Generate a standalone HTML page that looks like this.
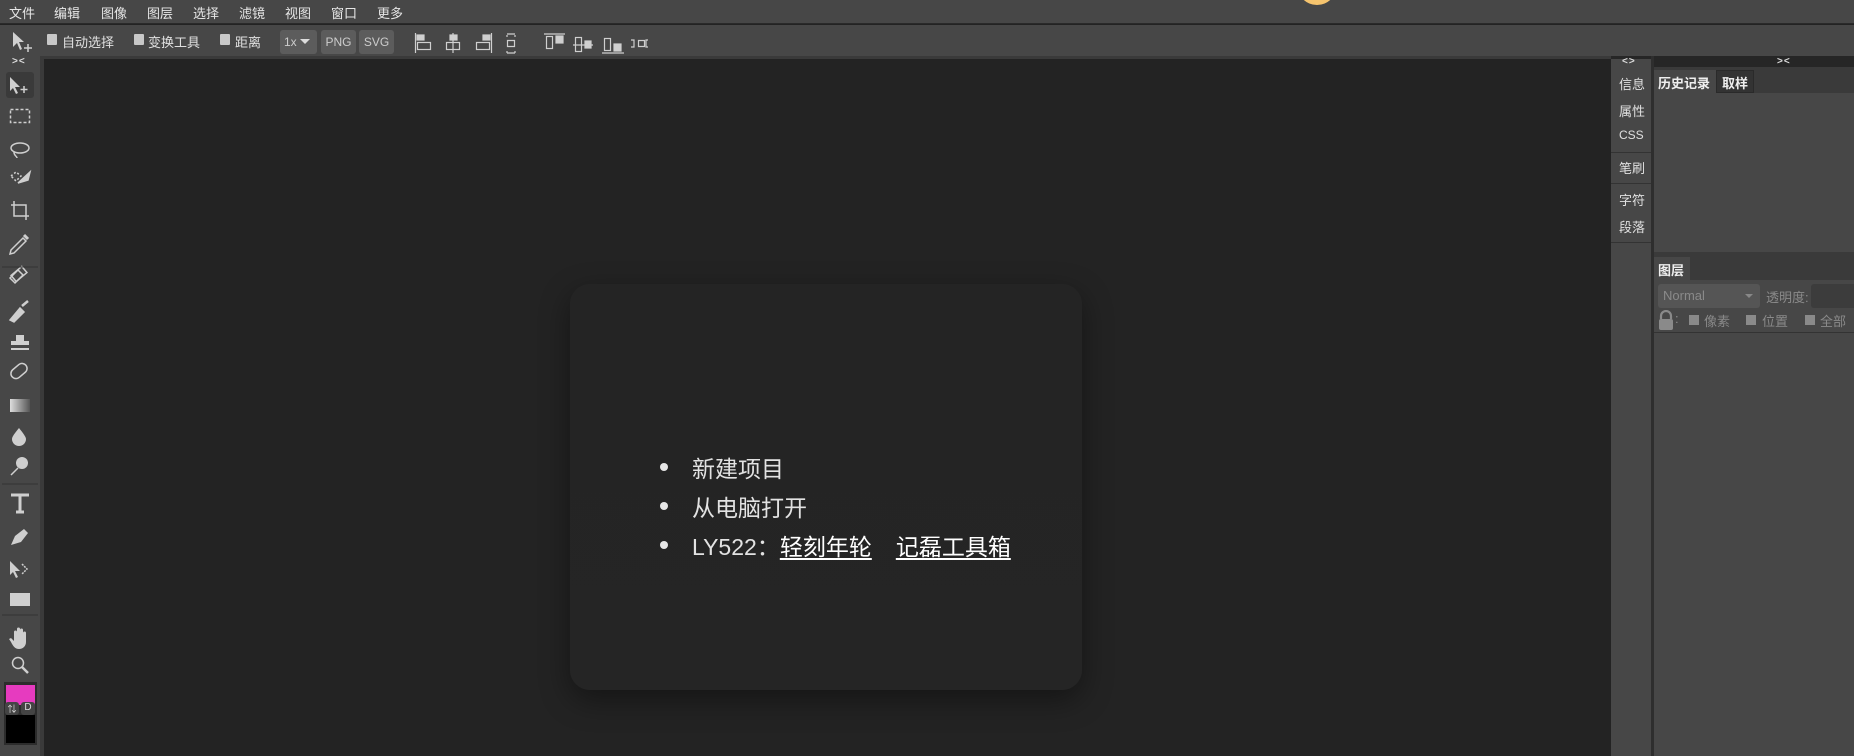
<!DOCTYPE html>
<html><head><meta charset="utf-8"><style>
*{margin:0;padding:0;box-sizing:border-box}
body{width:1854px;height:756px;overflow:hidden;background:#232323;font-family:"Liberation Sans","Noto Sans CJK SC",sans-serif;position:relative;color:#ddd}
.abs{position:absolute}
#menu{left:0;top:0;width:1854px;height:24px;background:#474747;border-bottom:1px solid #2a2a2a}
#menu span{position:absolute;top:3px;font-size:13px;color:#e6e6e6}
#tb{left:0;top:25px;width:1854px;height:31px;background:#474747}
#tb .cb{position:absolute;top:9px;width:10px;height:11px;background:#c8c8c8;border-radius:1px}
#tb .lb{position:absolute;top:7px;font-size:13px;color:#e0e0e0}
.btn{position:absolute;top:5px;height:24px;background:#5c5c5c;border-radius:3px;color:#ccc;font-size:12px;line-height:24px;text-align:center}
#strip{left:0;top:56px;width:1854px;height:3px;background:#3a3a3a}
#lt{left:0;top:56px;width:40px;height:700px;background:#474747}
#lt2{left:40px;top:59px;width:4px;height:697px;background:#3a3a3a}
#card{left:570px;top:284px;width:512px;height:406px;background:linear-gradient(#242424,#252525);border-radius:20px;box-shadow:0 10px 30px rgba(0,0,0,.4)}
.li{position:absolute;font-size:23px;color:#e2e2e2;left:692px}
.dot{position:absolute;left:660px;width:8px;height:8px;border-radius:50%;background:#e6e6e6}
.li u{text-decoration:underline;color:#fff;text-underline-offset:3px}
#rn{left:1611px;top:59px;width:40px;height:697px;background:#474747}
#rnh{left:1611px;top:56px;width:40px;height:11px;background:#262626}
.rnt{position:absolute;font-size:13px;color:#e0e0e0;left:1619px}
.sep{position:absolute;left:1611px;width:40px;height:1px;background:#333}
#rdiv{left:1651px;top:56px;width:3px;height:700px;background:#2e2e2e}
#rp{left:1654px;top:56px;width:200px;height:700px;background:#474747}
</style></head><body>
<div id="menu" class="abs">
<span style="left:9px">文件</span><span style="left:54px">编辑</span><span style="left:101px">图像</span><span style="left:147px">图层</span><span style="left:193px">选择</span><span style="left:239px">滤镜</span><span style="left:285px">视图</span><span style="left:331px">窗口</span><span style="left:377px">更多</span>
</div>
<div class="abs" style="left:1297px;top:-35px;width:40px;height:40px;border-radius:50%;background:#f6c46e"></div>
<div id="tb" class="abs">
<svg class="abs" style="left:10px;top:5px" width="24" height="24" viewBox="0 0 24 24"><path d="M3 2 L3 17 L7 13 L10 20 L12 19 L9 12 L14 12 Z" fill="#d0d0d0"/><path d="M18 14v8M14 18h8" stroke="#d0d0d0" stroke-width="1.5"/></svg>
<div class="cb" style="left:47px"></div><span class="lb" style="left:62px">自动选择</span>
<div class="cb" style="left:134px"></div><span class="lb" style="left:148px">变换工具</span>
<div class="cb" style="left:220px"></div><span class="lb" style="left:235px">距离</span>
<div class="btn" style="left:280px;width:37px;text-align:left;padding-left:4px">1x <span style="display:inline-block;border:5px solid transparent;border-top:5px solid #ddd;vertical-align:-3px"></span></div>
<div class="btn" style="left:321px;width:35px">PNG</div>
<div class="btn" style="left:359px;width:35px">SVG</div>
<svg class="abs" style="left:410px;top:5px" width="245" height="24" viewBox="410 29 245 24" fill="none" stroke="#cfcfcf" stroke-width="1.2">
<path d="M415.5 32v20"/><rect x="417" y="34" width="7" height="5" fill="#cfcfcf"/><rect x="417.5" y="41.5" width="13" height="7"/>
<path d="M453 32v20"/><rect x="450" y="34" width="7" height="5" fill="#cfcfcf"/><rect x="446.5" y="41.5" width="13" height="7"/>
<path d="M491.5 32v20"/><rect x="483" y="34" width="7" height="5" fill="#cfcfcf"/><rect x="476.5" y="41.5" width="13" height="7"/>
<path d="M507 33h8M507 36v-2M515 36v-2M507.5 39.5h7v6h-7zM507 50v2M515 50v2M507 52h8"/>
<path d="M544 33h21"/><rect x="546.5" y="35.5" width="6" height="12"/><rect x="556" y="35" width="7" height="7" fill="#cfcfcf"/>
<path d="M573 44h20"/><rect x="575.5" y="36.5" width="6" height="14"/><rect x="585" y="40" width="6" height="7" fill="#cfcfcf"/>
<path d="M602 52h22"/><rect x="604.5" y="37.5" width="6" height="12"/><rect x="614" y="43" width="7" height="7" fill="#cfcfcf"/>
<path d="M631 39h3v7h-3M638.5 39.5h6v6h-6zM648 39h-2v7h2"/>
</svg>
</div>
<div id="strip" class="abs"></div>
<div id="lt" class="abs"></div><div id="lt2" class="abs"></div>
<div class="abs" style="left:12px;top:56px;font-size:10px;color:#ddd;font-weight:bold;letter-spacing:1px">&gt;&lt;</div>
<div class="abs" style="left:6px;top:72px;width:28px;height:26px;background:#3a3a3a;border-radius:3px"></div>
<svg class="abs" style="left:0;top:66px" width="40" height="690" viewBox="0 66 40 690" fill="none" stroke="#cfcfcf" stroke-width="1.5">
<path d="M10 77v14l3-3 3 6 2-1-3-6h5z" fill="#cfcfcf" stroke="none"/><path d="M24 86v7M20.5 89.5h7" />
<rect x="10.5" y="109.5" width="19" height="13" stroke-dasharray="3 2"/>
<ellipse cx="20" cy="148" rx="9" ry="5"/><path d="M14 152c0 4 3 4 3 6"/>
<path d="M11 176l5-4 5 4-5 5z" stroke-dasharray="2 2"/><path d="M18 183l12-11-2 8z" fill="#cfcfcf"/>
<path d="M14 201v15h15M11 205h15v15"/>
<path d="M11 250l12-12 3 3-12 12-4 1z"/><path d="M24 235l4 4" stroke-width="3"/>
<path d="M10 278l8-8 5 5-8 8z"/><rect x="12" y="270" width="14" height="8" transform="rotate(-40 19 274)"/>
<path d="M10 320l10-12 4 4-10 10z" fill="#cfcfcf"/><path d="M22 306l6-5" stroke-width="2.5"/>
<path d="M16 335h8v6h5v4H11v-4h5z" fill="#cfcfcf" stroke="none"/><path d="M11 349h18" stroke-width="2"/>
<rect x="10" y="366" width="18" height="10" rx="5" transform="rotate(-40 19 371)"/>
<rect x="10" y="399" width="20" height="13" fill="url(#g)" stroke="none"/>
<path d="M19 428c-5 6-7 9-7 11a7 7 0 0 0 14 0c0-2-3-6-7-11z" fill="#cfcfcf" stroke="none"/>
<circle cx="22" cy="463" r="6" fill="#cfcfcf" stroke="none"/><path d="M18 468l-7 7"/>
<path d="M11 495h18M20 495v17M16 512h8" stroke-width="3"/>
<path d="M11 545l4-9 9-7 4 4-7 9z" fill="#cfcfcf" stroke="none"/>
<path d="M10 561v14l3-3 3 6 2-1-3-6h5z" fill="#cfcfcf" stroke="none"/><path d="M22 564l5 5-5 5" stroke-dasharray="2 1"/>
<rect x="10" y="593" width="20" height="13" fill="#cfcfcf" stroke="none"/>
<path d="M14 642v-10a1.5 1.5 0 0 1 3 0v6-9a1.5 1.5 0 0 1 3 0v9-8a1.5 1.5 0 0 1 3 0v9-6a1.5 1.5 0 0 1 3 0v9c0 4-3 7-7 7s-6-3-8-7l-2-3 2-1 3 3z" fill="#cfcfcf" stroke="none"/>
<circle cx="18" cy="663" r="5.5"/><path d="M22 667l6 6" stroke-width="2.5"/>
<defs><linearGradient id="g"><stop offset="0" stop-color="#ddd"/><stop offset="1" stop-color="#555"/></linearGradient></defs>
<path d="M2 267h36M2 484h36M2 615h36" stroke="#333" stroke-width="1"/>
</svg>
<div class="abs" style="left:4px;top:682px;width:33px;height:63px;background:#2c2c2c"></div>
<div class="abs" style="left:6px;top:685px;width:29px;height:20px;background:#e63bbf"></div>
<div class="abs" style="left:6px;top:715px;width:29px;height:28px;background:#000"></div>
<div class="abs" style="left:5px;top:702px;width:14px;height:13px;background:#444;border-radius:3px;font-size:9px;color:#ddd;text-align:center">⇅</div>
<div class="abs" style="left:21px;top:702px;width:14px;height:13px;background:#444;border-radius:3px;font-size:10px;color:#ddd;text-align:center">D</div>
<div id="card" class="abs"></div>
<div class="dot" style="top:463px"></div><div class="li" style="top:450px">新建项目</div>
<div class="dot" style="top:502px"></div><div class="li" style="top:489px">从电脑打开</div>
<div class="dot" style="top:541px"></div><div class="li" style="top:528px">LY522：<u>轻刻年轮</u><span style="display:inline-block;width:24px"></span><u>记磊工具箱</u></div>
<div id="rnh" class="abs"></div>
<div id="rn" class="abs"></div>
<div class="abs" style="left:1622px;top:56px;font-size:10px;font-weight:bold;color:#ddd;letter-spacing:1px">&lt;&gt;</div>
<div class="rnt" style="top:74px">信息</div><div class="rnt" style="top:101px">属性</div><div class="rnt" style="top:128px;font-size:12px">CSS</div>
<div class="sep" style="top:152px"></div>
<div class="rnt" style="top:158px">笔刷</div>
<div class="sep" style="top:183px"></div>
<div class="rnt" style="top:190px">字符</div><div class="rnt" style="top:217px">段落</div>
<div class="sep" style="top:242px"></div>
<div id="rdiv" class="abs"></div>
<div id="rp" class="abs"></div>
<div class="abs" style="left:1654px;top:56px;width:200px;height:11px;background:#262626"></div>
<div class="abs" style="left:1777px;top:56px;font-size:10px;font-weight:bold;color:#ddd;letter-spacing:1px">&gt;&lt;</div>
<div class="abs" style="left:1654px;top:67px;width:200px;height:26px;background:#3a3a3a"></div>
<div class="abs" style="left:1654px;top:70px;width:62px;height:23px;background:#474747;font-size:13px;font-weight:bold;color:#eee;padding:3px 0 0 4px">历史记录</div>
<div class="abs" style="left:1716px;top:70px;width:38px;height:23px;background:#333;border:1px solid #2a2a2a;font-size:13px;font-weight:bold;color:#eee;padding:2px 0 0 5px">取样</div>
<div class="abs" style="left:1654px;top:252px;width:200px;height:28px;background:#3a3a3a"></div>
<div class="abs" style="left:1654px;top:257px;width:36px;height:23px;background:#474747;font-size:13px;font-weight:bold;color:#eee;padding:3px 0 0 4px">图层</div>
<div class="abs" style="left:1658px;top:284px;width:102px;height:24px;background:#555;border-radius:3px;font-size:13px;color:#8a8a8a;padding:4px 0 0 5px">Normal</div>
<div class="abs" style="left:1745px;top:294px;border:4px solid transparent;border-top:4px solid #888"></div>
<div class="abs" style="left:1766px;top:287px;font-size:13px;color:#8a8a8a">透明度:</div>
<div class="abs" style="left:1811px;top:284px;width:43px;height:24px;background:#3c3c3c;border-radius:3px 0 0 3px"></div>
<svg class="abs" style="left:1658px;top:310px" width="16" height="20" viewBox="0 0 16 20"><path d="M3 9V6a5 5 0 0 1 10 0v3" fill="none" stroke="#8a8a8a" stroke-width="2.2"/><rect x="1" y="9" width="14" height="11" rx="2" fill="#8a8a8a"/></svg>
<div class="abs" style="left:1675px;top:311px;font-size:13px;color:#8a8a8a">:</div>
<div class="abs" style="left:1689px;top:315px;width:10px;height:10px;background:#8a8a8a"></div><div class="abs" style="left:1704px;top:311px;font-size:13px;color:#8a8a8a">像素</div>
<div class="abs" style="left:1746px;top:315px;width:10px;height:10px;background:#8a8a8a"></div><div class="abs" style="left:1762px;top:311px;font-size:13px;color:#8a8a8a">位置</div>
<div class="abs" style="left:1805px;top:315px;width:10px;height:10px;background:#8a8a8a"></div><div class="abs" style="left:1820px;top:311px;font-size:13px;color:#8a8a8a">全部</div>
<div class="abs" style="left:1654px;top:332px;width:200px;height:1px;background:#333"></div>
</body></html>
